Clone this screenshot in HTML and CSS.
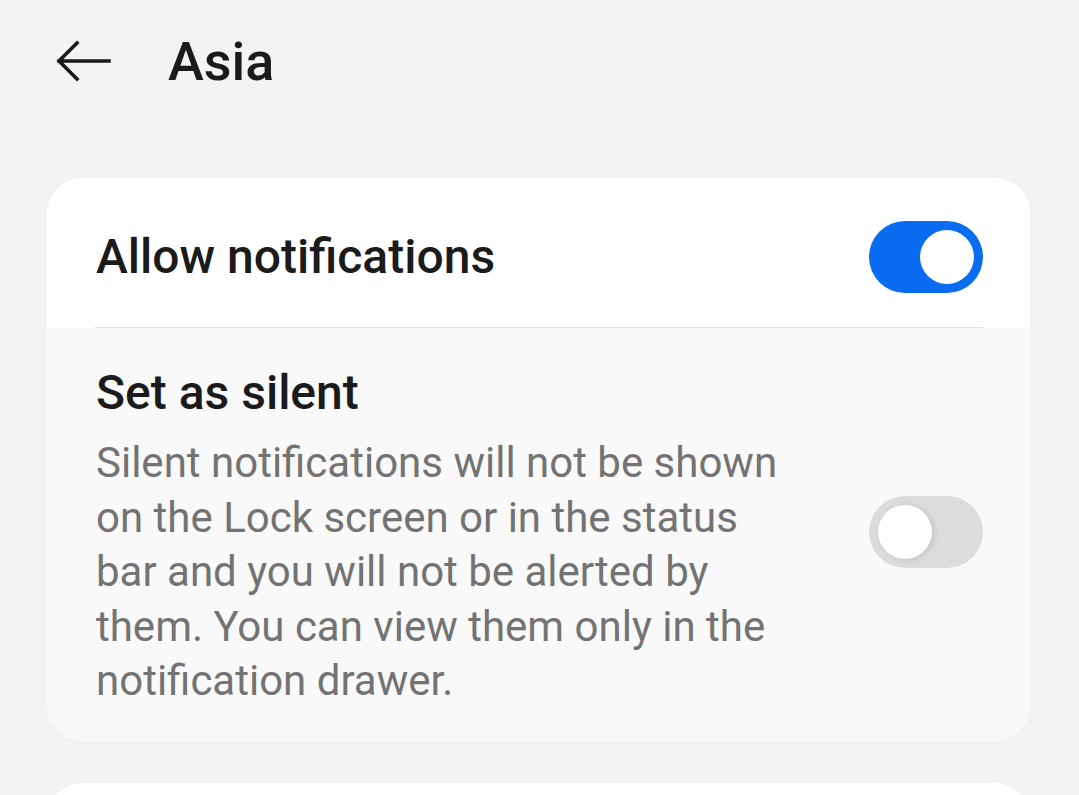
FILE: index.html
```html
<!DOCTYPE html>
<html lang="en">
<head>
<meta charset="utf-8">
<title>Asia</title>
<link rel="stylesheet" href="styles.css">
</head>
<body>
<header class="topbar">
  <svg class="back" width="56" height="44" viewBox="0 0 56 44" aria-hidden="true">
    <path d="M54 22H4M22 4L4 22L22 40" fill="none" stroke="#1a1a1a" stroke-width="3.6" stroke-linecap="square" stroke-linejoin="miter"/>
  </svg>
  <h1 class="title">Asia</h1>
</header>
<main class="content">
  <section class="card">
    <div class="row row-main">
      <div class="row-text">
        <div class="row-title">Allow notifications</div>
      </div>
      <div class="switch on"><span class="thumb"></span></div>
    </div>
    <div class="row row-sub">
      <div class="row-text">
        <div class="row-title">Set as silent</div>
        <p class="row-desc">Silent notifications will not be shown on the Lock screen or in the status bar and you will not be alerted by them. You can view them only in the notification drawer.</p>
      </div>
      <div class="switch off"><span class="thumb"></span></div>
    </div>
  </section>
  <section class="card card-next"></section>
</main>
</body>
</html>
```
FILE: styles.css
```css
html, body {
  margin: 0;
  padding: 0;
}
body {
  background: #f3f3f3;
  font-family: Roboto, "Noto Sans", "Liberation Sans", sans-serif;
  color: #1b1b1b;
  width: 1079px;
  height: 795px;
  overflow: hidden;
}
.topbar {
  display: flex;
  align-items: center;
  height: 122px;
  padding-left: 55px;
}
.back {
  display: block;
}
.title {
  margin: 0 0 0 57px;
  font-size: 54px;
  font-weight: 500;
  color: #1b1b1b;
}
.content {
  padding: 56px 49px 0 47px;
  display: flex;
  flex-direction: column;
  gap: 42px;
}
.card {
  background: #ffffff;
  border-radius: 36px;
  overflow: hidden;
}
.row {
  display: flex;
  align-items: center;
  justify-content: space-between;
  padding: 0 47px 0 49px;
  box-sizing: border-box;
}
.row-main {
  height: 150px;
  padding-top: 7px;
  background: #ffffff;
  position: relative;
}
.row-main::after {
  content: "";
  position: absolute;
  left: 48px;
  right: 47px;
  bottom: 0;
  height: 1px;
  background: #e0e0e0;
}
.row-sub {
  background: #f9f9f9;
  height: 413px;
  padding-top: 4px;
}
.row-text {
  width: 700px;
}
.row-title {
  font-size: 48px;
  font-weight: 500;
  color: #1b1b1b;
}
.row-desc {
  margin: 15px 0 0;
  font-size: 42px;
  line-height: 54.5px;
  color: #737373;
}
.switch {
  flex: none;
  width: 114px;
  height: 72px;
  border-radius: 36px;
  position: relative;
}
.switch.on {
  background: #0a6cf1;
}
.switch.off {
  background: #dcdcdc;
  margin-top: -10px;
}
.thumb {
  position: absolute;
  top: 9px;
  width: 54px;
  height: 54px;
  border-radius: 50%;
  background: #ffffff;
}
.switch.on .thumb {
  right: 9px;
}
.switch.off .thumb {
  left: 9px;
  box-shadow: 2px 1px 6px rgba(0,0,0,0.12);
}
.card-next {
  height: 120px;
}
```
